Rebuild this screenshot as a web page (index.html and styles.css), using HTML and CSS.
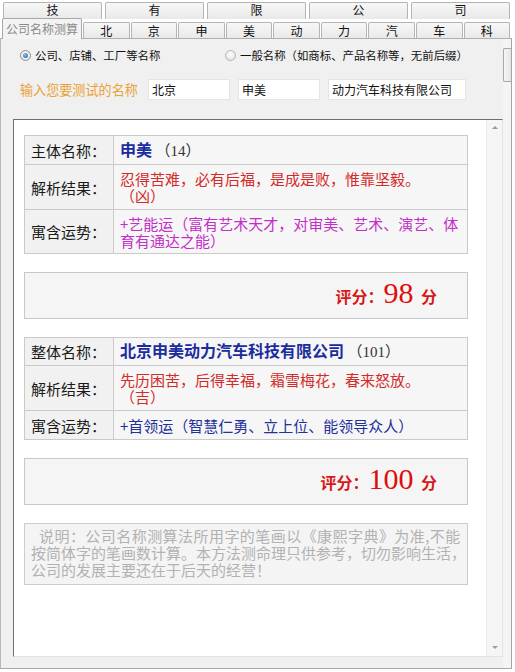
FILE: index.html
```html
<!DOCTYPE html>
<html lang="zh-CN">
<head>
<meta charset="utf-8">
<title>公司名称测算</title>
<link rel="stylesheet" href="styles.css">
</head>
<body>
<div class="win">
  <div class="tabrow r1">
    <div class="tab">技</div>
    <div class="tab">有</div>
    <div class="tab">限</div>
    <div class="tab">公</div>
    <div class="tab">司</div>
  </div>
  <div class="tabrow r2">
    <div class="tab sel">公司名称测算</div>
    <div class="tab">北</div>
    <div class="tab">京</div>
    <div class="tab">申</div>
    <div class="tab">美</div>
    <div class="tab">动</div>
    <div class="tab">力</div>
    <div class="tab">汽</div>
    <div class="tab">车</div>
    <div class="tab">科</div>
  </div>
  <div class="panel">
    <div class="main">
      <div class="radios">
        <label class="opt first"><span class="radio on"></span>公司、店铺、工厂等名称</label>
        <label class="opt"><span class="radio"></span>一般名称（如商标、产品名称等，无前后缀）</label>
      </div>
      <div class="inputs">
        <span class="prompt">输入您要测试的名称</span>
        <span class="field f1">北京</span>
        <span class="field f2">申美</span>
        <span class="field f3">动力汽车科技有限公司</span>
      </div>
      <div class="result">
        <div class="content">
          <table class="info">
            <tr class="h29"><td class="lab">主体名称：</td><td class="val"><b class="title">申美</b> <span class="num">（14）</span></td></tr>
            <tr class="h45"><td class="lab">解析结果：</td><td class="val red">忍得苦难，必有后福，是成是败，惟靠坚毅。<br>（凶）</td></tr>
            <tr class="h44"><td class="lab">寓含运势：</td><td class="val pink">+艺能运（富有艺术天才，对审美、艺术、演艺、体<br>育有通达之能）</td></tr>
          </table>
          <div class="score">评分：<span class="big">98 </span>分</div>
          <table class="info">
            <tr class="h28"><td class="lab">整体名称：</td><td class="val"><b class="title">北京申美动力汽车科技有限公司</b> <span class="num">（101）</span></td></tr>
            <tr class="h45"><td class="lab">解析结果：</td><td class="val red">先历困苦，后得幸福，霜雪梅花，春来怒放。<br>（吉）</td></tr>
            <tr class="h29"><td class="lab">寓含运势：</td><td class="val blue">+首领运（智慧仁勇、立上位、能领导众人）</td></tr>
          </table>
          <div class="score">评分：<span class="big">100 </span>分</div>
          <div class="note"><span class="first-line">说明：公司名称测算法所用字的笔画以《康熙字典》为准,不能</span><br>按简体字的笔画数计算。本方法测命理只供参考，切勿影响生活，<br>公司的发展主要还在于后天的经营！</div>
        </div>
        <div class="sb">
          <span class="arr up"></span>
          <span class="arr down"></span>
        </div>
      </div>
    </div>
    <div class="vscroll"><div class="thumb"></div></div>
  </div>
</div>
</body>
</html>
```

FILE: styles.css
```css
html, body {
  margin: 0;
  padding: 0;
  background: #ffffff;
}
body {
  font-family: "Noto Sans CJK SC", "Liberation Sans", sans-serif;
  color: #111;
}
.win {
  width: 512px;
  height: 669px;
  display: flex;
  flex-direction: column;
}
.tabrow {
  display: flex;
  box-sizing: border-box;
}
.tab {
  flex: 1;
  box-sizing: border-box;
  border: 1px solid #b4b4b4;
  border-bottom: none;
  border-radius: 2px 2px 0 0;
  background: linear-gradient(#f7f7f7, #e9e9e9);
  font-size: 12px;
  line-height: 14px;
  text-align: center;
  color: #111;
}
.r1 {
  height: 19px;
  padding: 2px 2px 0 3px;
  gap: 3px;
}
.r1 .tab {
  height: 17px;
}
.r2 {
  height: 19px;
  padding: 0 2px 0 2px;
  gap: 1px;
}
.r2 .tab {
  margin-top: 3px;
  height: 16px;
  line-height: 15px;
}
.r2 .tab.sel {
  flex: 0 0 80px;
  margin-top: -1px;
  height: 21px;
  line-height: 19px;
  background: #f3f3f3;
  color: #8a8a8a;
  position: relative;
  z-index: 1;
  border-color: #a8a8a8;
}
.panel {
  flex: 1;
  display: flex;
  background: #f0f0f0;
  border-top: 1px solid #b0b0b0;
  border-left: 1px solid #b8b8b8;
  border-bottom: 1px solid #a8a8a8;
}
.main {
  width: 502px;
  display: flex;
  flex-direction: column;
}
.vscroll {
  width: 8px;
  border-right: 1px solid #a4a4a4;
  background: #f4f4f4;
  padding-top: 9px;
}
.thumb {
  height: 32px;
  border: 1px solid #a8a8a8;
  border-right: none;
  border-radius: 2px 0 0 2px;
  background: linear-gradient(90deg, #f6f6f6, #e4e4e4);
}
.radios {
  display: flex;
  align-items: center;
  height: 16px;
  margin-top: 8px;
  padding-left: 19px;
  font-size: 11.4px;
  color: #111;
}
.opt {
  display: flex;
  align-items: center;
}
.opt.first {
  width: 205px;
}
.radio {
  width: 11px;
  height: 11px;
  box-sizing: border-box;
  border: 1px solid #8e8f8f;
  border-radius: 50%;
  background: radial-gradient(circle at 50% 40%, #ffffff, #dcdcdc);
  margin-right: 4px;
  display: flex;
  align-items: center;
  justify-content: center;
}
.radio.on::after {
  content: "";
  width: 5px;
  height: 5px;
  border-radius: 50%;
  background: radial-gradient(circle at 40% 35%, #8fc3f0, #1f4e9a);
}
.radios .opt:last-child .radio {
  border-color: #b4b4b4;
}
.inputs {
  display: flex;
  align-items: center;
  margin-top: 16px;
  height: 21px;
  padding-left: 19px;
}
.prompt {
  width: 128px;
  font-size: 13.1px;
  color: #eba136;
}
.field {
  box-sizing: border-box;
  height: 21px;
  background: #fff;
  border: 1px solid #e4e4e4;
  font-size: 12px;
  line-height: 19px;
  padding-left: 3px;
  color: #111;
}
.f1, .f2 {
  width: 82px;
  margin-right: 8px;
}
.f3 {
  width: 138px;
}
.result {
  margin-top: 19px;
  margin-left: 12px;
  height: 538px;
  box-sizing: border-box;
  display: flex;
  background: #ffffff;
  border-top: 1px solid #6e6e6e;
  border-left: 1px solid #6e6e6e;
  border-right: 1px solid #e2e2e2;
  border-bottom: 1px solid #e2e2e2;
}
.content {
  flex: 1;
  padding: 15px 0 0 10px;
}
.sb {
  width: 15px;
  background: #f5f5f5;
  border-left: 1px solid #ececec;
  display: flex;
  flex-direction: column;
  justify-content: space-between;
  align-items: center;
  padding: 6px 0 7px;
}
.arr {
  width: 0;
  height: 0;
  border-left: 3px solid transparent;
  border-right: 3px solid transparent;
}
.arr.up {
  border-bottom: 3px solid #9a9a9a;
}
.arr.down {
  border-top: 3px solid #9a9a9a;
}
.info {
  width: 444px;
  border-collapse: collapse;
  border: 1px solid #c6c6c6;
  font-size: 15px;
  line-height: 17px;
}
.info td {
  border: 1px solid #cacaca;
  padding: 0 6px;
  vertical-align: middle;
}
.lab {
  width: 76px;
  background: #f1f1f1;
  color: #1a1a1a;
  white-space: nowrap;
}
.val {
  background: #f6f6f6;
  white-space: nowrap;
}
.h29 td { height: 28px; }
.h28 td { height: 27px; }
.h45 td { height: 44px; }
.h44 td { height: 43px; }
.title {
  font-size: 16px;
  color: #1b2c9e;
  font-weight: bold;
}
.num {
  font-family: "Liberation Serif", "Noto Sans CJK SC", serif;
  color: #333;
}
.red { color: #d32a2a; }
.pink { color: #c22fc8; }
.blue { color: #22309a; }
.score {
  margin-top: 18px;
  width: 444px;
  height: 47px;
  box-sizing: border-box;
  background: #f5f5f5;
  border: 1px solid #c8c8c8;
  text-align: right;
  padding-right: 30px;
  font-size: 16px;
  font-weight: bold;
  line-height: 40px;
  color: #d81818;
}
.big {
  font-family: "Liberation Serif", serif;
  font-size: 30px;
  font-weight: normal;
  color: #e00d0d;
}
.score + .info {
  margin-top: 18px;
}
.note {
  margin-top: 18px;
  width: 444px;
  height: 62px;
  box-sizing: border-box;
  background: #f4f4f4;
  border: 1px solid #cccccc;
  padding: 3px 0 0 6px;
  font-size: 15px;
  line-height: 17px;
  color: #b2b2b2;
  white-space: nowrap;
  overflow: hidden;
}
.first-line {
  display: inline-block;
  padding-left: 8px;
  letter-spacing: 0.45px;
}
```
